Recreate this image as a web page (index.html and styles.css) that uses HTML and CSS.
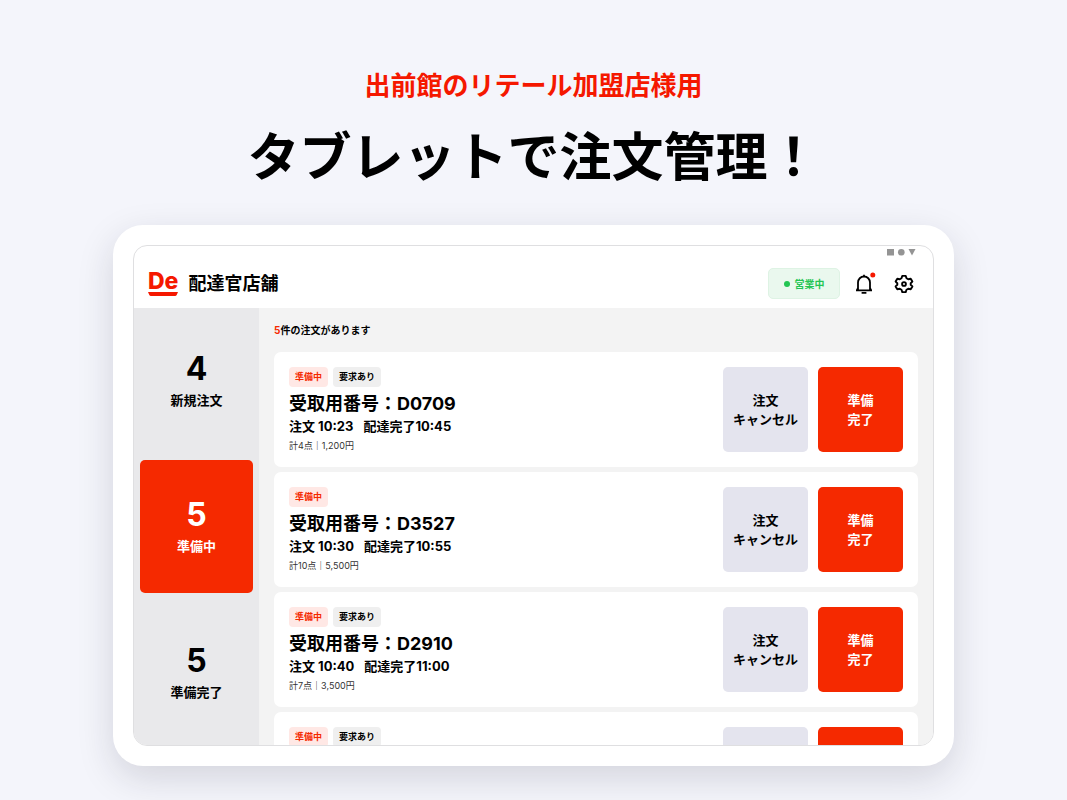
FILE: index.html
```html
<!DOCTYPE html>
<html lang="ja">
<head>
    <meta charset="UTF-8">
    <meta name="viewport" content="width=device-width, initial-scale=1.0">
    <title>タブレットで注文管理</title>
    <link rel="stylesheet" href="styles.css">
</head>
<body>
    <div class="hero">
        <p class="subtitle">出前館のリテール加盟店様用</p>
        <h1>タブレットで注文管理！</h1>
    </div>

    <div class="tablet">
        <div class="screen">
            <div class="system-bar">
                <svg width="30" height="8" viewBox="0 0 30 8" fill="#949494">
                    <rect x="1" y="1" width="7" height="6.5"/>
                    <circle cx="15.3" cy="4.3" r="3.3"/>
                    <path d="M22.5 1h7L26 7.5z"/>
                </svg>
            </div>
            <header>
                <a href="#" class="logo">De
                    <svg width="30" height="4" viewBox="0 0 30 4" fill="#f51800"><path d="M0 0h30l-1.200 2.800Q28.300 4 27 4H3Q1.700 4 1.200 2.800z"/></svg>
                </a>
                <h2>配達官店舗</h2>
                <button type="button" class="status"><span class="dot"></span>営業中</button>
                <button type="button" class="icon-btn" aria-label="通知">
                    <svg width="24" height="24" viewBox="0 0 24 24" fill="none" stroke="#000" stroke-width="1.8">
                        <path d="M4 18.3h16M6 18V10.500a6 6 0 0 1 12 0V18M4.900 18.300L6 16M19.100 18.300L18 16M12 4.700V2.800M9.600 20.900h4.800"/>
                        <circle cx="20.8" cy="3" r="2.5" fill="#f51800" stroke="none"/>
                    </svg>
                </button>
                <button type="button" class="icon-btn" aria-label="設定">
                    <svg width="24" height="24" viewBox="0 0 24 24" fill="none" stroke="#000" stroke-width="1.9" stroke-linejoin="round">
                        <path d="M10.300 3.900h3.400l.8 2.300 1.700 1 2.500-.5 1.700 2.900-1.700 1.600v1.600l1.700 1.600-1.700 2.900-2.500-.5-1.700 1-.8 2.300h-3.400l-.8-2.300-1.700-1-2.500.5-1.700-2.900 1.700-1.600v-1.600L3.600 9.600l1.700-2.900 2.500.5 1.700-1z"/>
                        <circle cx="12" cy="12" r="1.900"/>
                    </svg>
                </button>
            </header>

            <div class="content">
                <nav>
                    <a href="#" class="tab"><span class="count">4</span>新規注文</a>
                    <a href="#" class="tab active"><span class="count">5</span>準備中</a>
                    <a href="#" class="tab"><span class="count">5</span>準備完了</a>
                </nav>
                <main>
                    <p class="summary"><span>5</span>件の注文があります</p>

                    <div class="order">
                        <div class="info">
                            <div class="badges">
                                <span class="badge red">準備中</span>
                                <span class="badge">要求あり</span>
                            </div>
                            <h3>受取用番号：D0709</h3>
                            <p class="time"><span>注文 10:23</span><span>配達完了10:45</span></p>
                            <p class="total">計4点｜1,200円</p>
                        </div>
                        <button type="button" class="action cancel">注文<br>キャンセル</button>
                        <button type="button" class="action done">準備<br>完了</button>
                    </div>

                    <div class="order">
                        <div class="info">
                            <div class="badges">
                                <span class="badge red">準備中</span>
                            </div>
                            <h3>受取用番号：D3527</h3>
                            <p class="time"><span>注文 10:30</span><span>配達完了10:55</span></p>
                            <p class="total">計10点｜5,500円</p>
                        </div>
                        <button type="button" class="action cancel">注文<br>キャンセル</button>
                        <button type="button" class="action done">準備<br>完了</button>
                    </div>

                    <div class="order">
                        <div class="info">
                            <div class="badges">
                                <span class="badge red">準備中</span>
                                <span class="badge">要求あり</span>
                            </div>
                            <h3>受取用番号：D2910</h3>
                            <p class="time"><span>注文 10:40</span><span>配達完了11:00</span></p>
                            <p class="total">計7点｜3,500円</p>
                        </div>
                        <button type="button" class="action cancel">注文<br>キャンセル</button>
                        <button type="button" class="action done">準備<br>完了</button>
                    </div>

                    <div class="order">
                        <div class="info">
                            <div class="badges">
                                <span class="badge red">準備中</span>
                                <span class="badge">要求あり</span>
                            </div>
                        </div>
                        <button type="button" class="action cancel" aria-label="注文キャンセル"></button>
                        <button type="button" class="action done" aria-label="準備完了"></button>
                    </div>
                </main>
            </div>
        </div>
    </div>
</body>
</html>
```
FILE: styles.css
```css
* {
    box-sizing: border-box;
}
body {
    margin: 0;
    min-height: 100vh;
    background-color: #f4f5fb;
    font-family: Inter, "Noto Sans CJK JP", sans-serif;
    color: #000;
    overflow: hidden;
}
h1, h2, h3, p {
    margin: 0;
}
a {
    color: inherit;
    text-decoration: none;
}
button {
    border: none;
    padding: 0;
    font-family: inherit;
    font-weight: bold;
    cursor: pointer;
}

.hero {
    padding-top: 64px;
    text-align: center;
    font-family: "Noto Sans CJK JP", sans-serif;
}
.subtitle {
    font-size: 26px;
    line-height: 40px;
    font-weight: bold;
    color: #f51800;
}
h1 {
    font-size: 52px;
    line-height: 80px;
    margin-top: 10px;
}

.tablet {
    width: 90%;
    max-width: 841px;
    margin: 31px auto 0;
    padding: 20px;
    background-color: #fff;
    border-radius: 30px;
    box-shadow: 0 12px 36px rgba(30, 30, 50, 0.15);
}
.screen {
    aspect-ratio: 8 / 5;
    display: flex;
    flex-direction: column;
    overflow: hidden;
    border: 1px solid #dfdfe1;
    border-radius: 14px;
}
.system-bar {
    height: 13px;
    display: flex;
    justify-content: flex-end;
    padding: 2px 17px 0;
}

header {
    height: 49px;
    flex-shrink: 0;
    display: flex;
    align-items: center;
    padding: 0 17px 0 14px;
}
.logo {
    display: flex;
    flex-direction: column;
    align-items: center;
    gap: 1px;
    color: #f51800;
    font-size: 23px;
    line-height: 20px;
    font-weight: 800;
}
h2 {
    flex: 1;
    margin-left: 10px;
    font-size: 18px;
    line-height: 26px;
}
.status {
    display: flex;
    align-items: center;
    justify-content: center;
    gap: 5px;
    width: 72px;
    height: 31px;
    margin-right: 12px;
    background-color: #eaf8ee;
    border: 1px solid #def3e4;
    border-radius: 5px;
    color: #23c552;
    font-size: 10px;
}
.dot {
    width: 6px;
    height: 6px;
    border-radius: 50%;
    background-color: #23c552;
}
.icon-btn {
    width: 24px;
    height: 24px;
    background: none;
}
.icon-btn svg {
    display: block;
    overflow: visible;
}
.icon-btn + .icon-btn {
    margin-left: 16px;
}

.content {
    flex: 1;
    min-height: 0;
    display: flex;
}
nav {
    width: 125px;
    flex-shrink: 0;
    display: flex;
    flex-direction: column;
    gap: 13px;
    padding: 6px;
    background-color: #e9e9eb;
}
.tab {
    height: 133px;
    flex-shrink: 0;
    display: flex;
    flex-direction: column;
    align-items: center;
    padding-top: 34px;
    border-radius: 5px;
    font-size: 13px;
    line-height: 20px;
    font-weight: bold;
}
.count {
    font-size: 32px;
    line-height: 42px;
}
.active {
    background-color: #f52900;
    color: #fff;
}

main {
    flex: 1;
    display: flex;
    flex-direction: column;
    gap: 5px;
    padding: 15px 15px 0;
    background-color: #f3f3f3;
}
.summary {
    margin-bottom: 10px;
    font-size: 10px;
    line-height: 14px;
    font-weight: bold;
}
.summary span {
    color: #f52900;
}
.order {
    height: 115px;
    flex-shrink: 0;
    display: flex;
    gap: 10px;
    padding: 15px 15px 11px;
    background-color: #fff;
    border-radius: 7px;
}
.info {
    flex: 1;
}
.badges {
    display: flex;
    gap: 5px;
    margin-bottom: 5px;
}
.badge {
    padding: 0 6px;
    border-radius: 4px;
    background-color: #efefef;
    font-size: 9px;
    line-height: 20px;
    font-weight: bold;
}
.red {
    background-color: #ffe8e5;
    color: #f52900;
}
h3 {
    font-size: 18px;
    line-height: 24px;
}
.time {
    display: flex;
    gap: 10px;
    font-size: 13px;
    line-height: 20px;
    font-weight: bold;
}
.total {
    font-size: 9px;
    line-height: 20px;
    color: #333;
}
.action {
    width: 85px;
    height: 85px;
    border-radius: 5px;
    font-size: 13px;
    line-height: 19px;
}
.cancel {
    background-color: #e4e4ee;
    color: #000;
}
.done {
    background-color: #f52900;
    color: #fff;
}
```
